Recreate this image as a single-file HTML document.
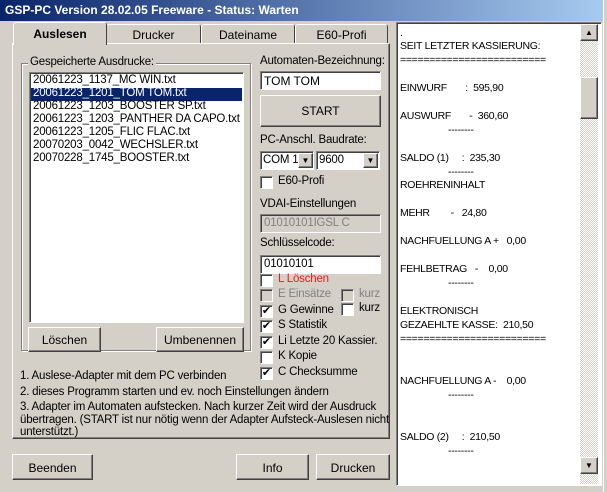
<!DOCTYPE html><html><head><meta charset="utf-8"><style>
*{box-sizing:border-box;margin:0;padding:0}
body{width:607px;height:492px;background:#d4d0c8;font-family:"Liberation Sans",sans-serif;font-size:11px;color:#000;position:relative;overflow:hidden}
.a{position:absolute;white-space:nowrap}
.title{left:0;top:0;width:603px;height:21px;background:linear-gradient(90deg,#0a246a,#a6caf0);color:#fff;font-weight:bold;font-size:12px;padding:3px 5px}
.raised{border:1px solid;border-color:#fff #404040 #404040 #fff;box-shadow:inset -1px -1px #808080}
.sunk{border:1px solid;border-color:#808080 #fff #fff #808080;box-shadow:inset 1px 1px #404040}
.btn{text-align:center;font-size:12px}
.tab{height:21px;border:1px solid;border-bottom:none;border-color:#fff #404040 #404040 #fff;border-radius:3px 3px 0 0;text-align:center;font-size:12px;padding-top:3px}
.cb{width:13px;height:13px;background:#fff}
.cbl{font-size:11.5px;letter-spacing:-0.2px}
.ta{font-size:10.5px;letter-spacing:-0.3px}
</style></head><body>
<div class="a title">GSP-PC Version 28.02.05 Freeware - Status: Warten</div>
<div class="a" style="left:603px;top:0;width:4px;height:492px;background:#d4d0c8;border-left:1px solid #fff"></div>

<div class="a raised" style="left:12px;top:43px;width:378px;height:396px"></div>
<div class="a tab" style="left:106px;top:24px;width:95px;height:19px">Drucker</div>
<div class="a tab" style="left:201px;top:24px;width:94px;height:19px">Dateiname</div>
<div class="a tab" style="left:295px;top:24px;width:93px;height:19px">E60-Profi</div>
<div class="a tab" style="left:13px;top:22px;width:94px;height:23px;background:#d4d0c8;font-weight:bold;padding-top:4px">Auslesen</div>

<div class="a" style="left:21px;top:63px;width:230px;height:288px;border:1px solid #808080;box-shadow:1px 1px #fff,inset 1px 1px #fff"></div>
<div class="a cbl" style="left:28px;top:56px;background:#d4d0c8;padding:0 2px">Gespeicherte Ausdrucke:</div>
<div class="a sunk" style="left:29px;top:72px;width:215px;height:251px;background:#fff"></div>
<div class="a cbl" style="left:33px;top:74px;line-height:13px">20061223_1137_MC WIN.txt</div>
<div class="a" style="left:31px;top:88px;width:211px;height:13px;background:#0a246a"></div>
<div class="a cbl" style="left:33px;top:87px;line-height:13px;color:#fff">20061223_1201_TOM TOM.txt</div>
<div class="a cbl" style="left:33px;top:100px;line-height:13px">20061223_1203_BOOSTER SP.txt<br>20061223_1203_PANTHER DA CAPO.txt<br>20061223_1205_FLIC FLAC.txt<br>20070203_0042_WECHSLER.txt<br>20070228_1745_BOOSTER.txt</div>
<div class="a raised btn" style="left:28px;top:327px;width:73px;height:25px;padding-top:5px">Löschen</div>
<div class="a raised btn" style="left:156px;top:327px;width:88px;height:25px;padding-top:5px">Umbenennen</div>

<div class="a cbl" style="left:260px;top:55px">Automaten-Bezeichnung:</div>
<div class="a sunk" style="left:260px;top:71px;width:121px;height:19px;background:#fff;font-size:12px;padding:2px 3px">TOM TOM</div>
<div class="a raised btn" style="left:260px;top:95px;width:121px;height:32px;padding-top:8px">START</div>
<div class="a cbl" style="left:260px;top:134px">PC-Anschl. Baudrate:</div>
<div class="a sunk cbl" style="left:260px;top:151px;width:54px;height:19px;background:#fff;padding:2px 2px">COM 1</div>
<div class="a raised" style="left:298px;top:153px;width:15px;height:15px;background:#d4d0c8;font-size:8px;text-align:center;line-height:13px">▼</div>
<div class="a sunk cbl" style="left:316px;top:151px;width:64px;height:19px;background:#fff;padding:2px 2px">9600</div>
<div class="a raised" style="left:363px;top:153px;width:15px;height:15px;background:#d4d0c8;font-size:8px;text-align:center;line-height:13px">▼</div>
<div class="a sunk cb" style="left:260px;top:176px"></div><div class="a cbl" style="left:278px;top:175px">E60-Profi</div>
<div class="a cbl" style="left:260px;top:198px">VDAI-Einstellungen</div>
<div class="a sunk cbl" style="left:260px;top:214px;width:121px;height:19px;padding:2px 3px;color:#808080">01010101IGSL C</div>
<div class="a cbl" style="left:260px;top:237px">Schlüsselcode:</div>
<div class="a sunk cbl" style="left:260px;top:255px;width:121px;height:19px;background:#fff;padding:2px 3px">01010101</div>

<div class="a sunk cb" style="left:260px;top:274px"></div><div class="a cbl" style="left:278px;top:273px;color:#e02020">L Löschen</div>
<div class="a sunk cb" style="left:260px;top:289px;background:#d4d0c8"></div><div class="a cbl" style="left:278px;top:288px;color:#808080">E Einsätze</div>
<div class="a sunk cb" style="left:341px;top:289px;background:#d4d0c8"></div><div class="a cbl" style="left:359px;top:288px;color:#808080">kurz</div>
<div class="a sunk cb" style="left:260px;top:305px;font-size:11px;line-height:11px;text-align:center">✔</div><div class="a cbl" style="left:278px;top:304px">G Gewinne</div>
<div class="a sunk cb" style="left:341px;top:303px"></div><div class="a cbl" style="left:359px;top:302px">kurz</div>
<div class="a sunk cb" style="left:260px;top:320px;font-size:11px;line-height:11px;text-align:center">✔</div><div class="a cbl" style="left:278px;top:319px">S Statistik</div>
<div class="a sunk cb" style="left:260px;top:336px;font-size:11px;line-height:11px;text-align:center">✔</div><div class="a cbl" style="left:278px;top:335px">Li Letzte 20 Kassier.</div>
<div class="a sunk cb" style="left:260px;top:351px"></div><div class="a cbl" style="left:278px;top:350px">K Kopie</div>
<div class="a sunk cb" style="left:260px;top:367px;font-size:11px;line-height:11px;text-align:center">✔</div><div class="a cbl" style="left:278px;top:366px">C Checksumme</div>

<div class="a cbl" style="left:20px;top:368px;line-height:16px">1. Auslese-Adapter mit dem PC verbinden<br>2. dieses Programm starten und ev. noch Einstellungen ändern</div>
<div class="a cbl" style="left:20px;top:401px;line-height:12.5px;white-space:normal;width:375px">3. Adapter im Automaten aufstecken. Nach kurzer Zeit wird der Ausdruck übertragen. (START ist nur nötig wenn der Adapter Aufsteck-Auslesen nicht unterstützt.)</div>

<div class="a raised btn" style="left:12px;top:454px;width:81px;height:26px;padding-top:6px">Beenden</div>
<div class="a raised btn" style="left:236px;top:454px;width:73px;height:26px;padding-top:6px">Info</div>
<div class="a raised btn" style="left:316px;top:454px;width:74px;height:26px;padding-top:6px">Drucken</div>

<div class="a sunk" style="left:396px;top:22px;width:206px;height:464px;background:#fff"></div>
<div class="a" style="left:580px;top:24px;width:18px;height:460px;background:repeating-conic-gradient(#d4d0c8 0 25%,#fff 0 50%) 0 0/2px 2px"></div>
<div class="a raised" style="left:580px;top:24px;width:18px;height:17px;background:#d4d0c8;font-size:8px;text-align:center;line-height:15px">▲</div>
<div class="a raised" style="left:580px;top:77px;width:18px;height:42px;background:#d4d0c8"></div>
<div class="a raised" style="left:580px;top:457px;width:18px;height:17px;background:#d4d0c8;font-size:8px;text-align:center;line-height:15px">▼</div>
<div class="a ta" style="left:400px;top:27px">.</div>
<div class="a ta" style="left:400px;top:40px">SEIT LETZTER KASSIERUNG:</div>
<div class="a ta" style="left:400px;top:54px">=========================</div>
<div class="a ta" style="left:400px;top:82px">EINWURF &nbsp;&nbsp;&nbsp;&nbsp;&nbsp;&nbsp;: &nbsp;595,90</div>
<div class="a ta" style="left:400px;top:110px">AUSWURF &nbsp;&nbsp;&nbsp;&nbsp;&nbsp;&nbsp;- &nbsp;360,60</div>
<div class="a ta" style="left:448px;top:124px">--------</div>
<div class="a ta" style="left:400px;top:152px">SALDO (1) &nbsp;&nbsp;&nbsp;&nbsp;: &nbsp;235,30</div>
<div class="a ta" style="left:448px;top:166px">--------</div>
<div class="a ta" style="left:400px;top:179px">ROEHRENINHALT</div>
<div class="a ta" style="left:400px;top:207px">MEHR &nbsp;&nbsp;&nbsp;&nbsp;&nbsp;&nbsp;&nbsp;- &nbsp;&nbsp;24,80</div>
<div class="a ta" style="left:400px;top:235px">NACHFUELLUNG A + &nbsp;&nbsp;0,00</div>
<div class="a ta" style="left:400px;top:263px">FEHLBETRAG &nbsp;&nbsp;- &nbsp;&nbsp;&nbsp;0,00</div>
<div class="a ta" style="left:448px;top:277px">--------</div>
<div class="a ta" style="left:400px;top:305px">ELEKTRONISCH</div>
<div class="a ta" style="left:400px;top:319px">GEZAEHLTE KASSE: &nbsp;210,50</div>
<div class="a ta" style="left:400px;top:333px">=========================</div>
<div class="a ta" style="left:400px;top:375px">NACHFUELLUNG A - &nbsp;&nbsp;&nbsp;0,00</div>
<div class="a ta" style="left:448px;top:389px">--------</div>
<div class="a ta" style="left:400px;top:431px">SALDO (2) &nbsp;&nbsp;&nbsp;&nbsp;: &nbsp;210,50</div>
<div class="a ta" style="left:448px;top:445px">--------</div>
</body></html>
